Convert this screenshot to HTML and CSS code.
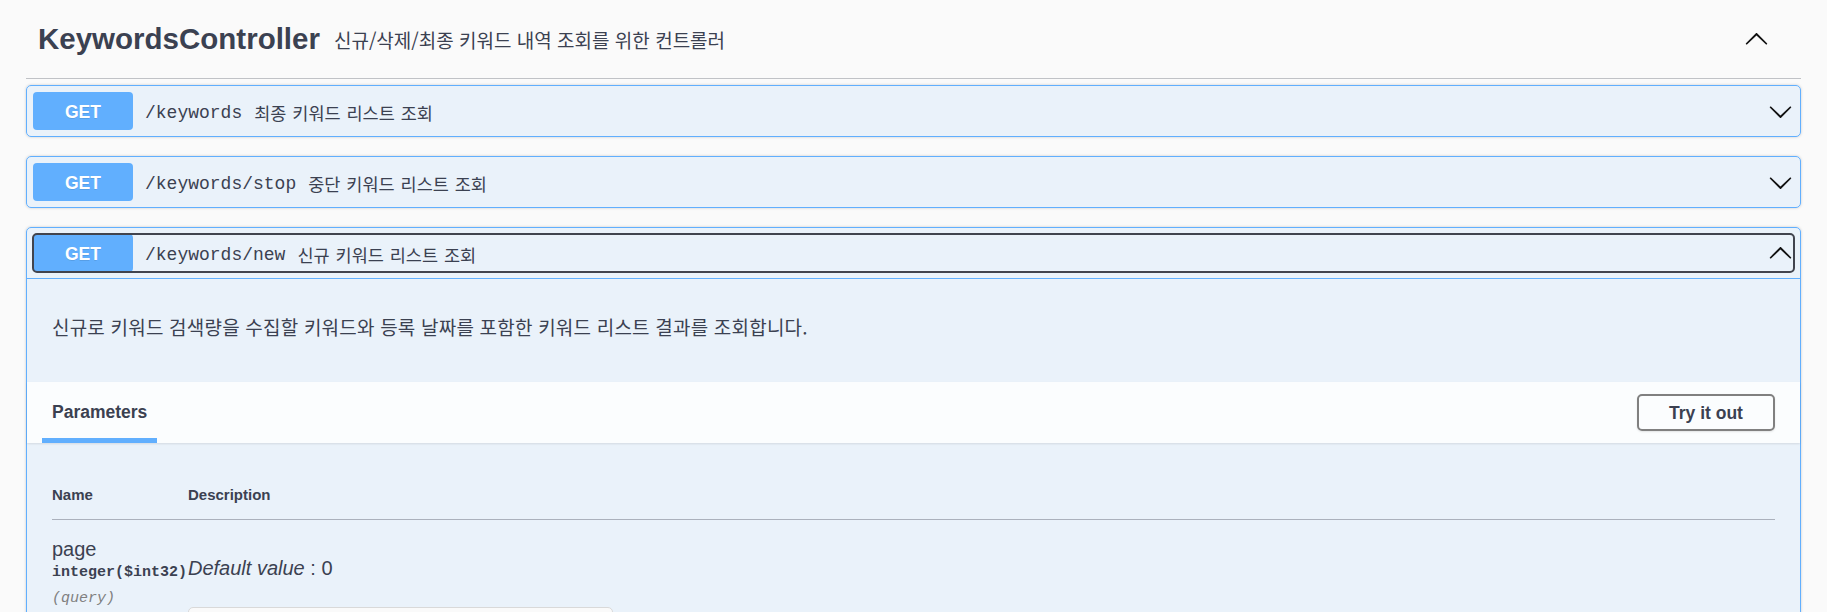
FILE: index.html
```html
<!DOCTYPE html>
<html lang="ko">
<head>
  <meta charset="UTF-8">
  <meta name="viewport" content="width=device-width, initial-scale=1.0">
  <title>Swagger UI</title>
  <link rel="stylesheet" href="styles.css">
</head>
<body>
  <div class="wrapper">
    <section class="tag-section">
      <h3 class="tag-header">
        <span class="tag-title">KeywordsController</span>
        <small class="tag-desc">신규/삭제/최종 키워드 내역 조회를 위한 컨트롤러</small>
        <button class="expand-btn">
          <svg width="25" height="25" viewBox="0 0 20 20"><path transform="rotate(180 10 10)" d="M17.418 6.109c.272-.268.709-.268.979 0s.271.701 0 .969l-7.908 7.83c-.27.268-.707.268-.979 0l-7.908-7.83c-.27-.268-.27-.701 0-.969.271-.268.709-.268.979 0L10 13.25l7.418-7.141z"/></svg>
        </button>
      </h3>

      <div class="opblock">
        <div class="summary">
          <div class="summary-control">
            <span class="method">GET</span>
            <span class="path">/keywords</span>
            <span class="summary-desc">최종 키워드 리스트 조회</span>
            <svg class="arrow" width="25" height="25" viewBox="0 0 20 20"><path d="M17.418 6.109c.272-.268.709-.268.979 0s.271.701 0 .969l-7.908 7.83c-.27.268-.707.268-.979 0l-7.908-7.83c-.27-.268-.27-.701 0-.969.271-.268.709-.268.979 0L10 13.25l7.418-7.141z"/></svg>
          </div>
        </div>
      </div>

      <div class="opblock">
        <div class="summary">
          <div class="summary-control">
            <span class="method">GET</span>
            <span class="path">/keywords/stop</span>
            <span class="summary-desc">중단 키워드 리스트 조회</span>
            <svg class="arrow" width="25" height="25" viewBox="0 0 20 20"><path d="M17.418 6.109c.272-.268.709-.268.979 0s.271.701 0 .969l-7.908 7.83c-.27.268-.707.268-.979 0l-7.908-7.83c-.27-.268-.27-.701 0-.969.271-.268.709-.268.979 0L10 13.25l7.418-7.141z"/></svg>
          </div>
        </div>
      </div>

      <div class="opblock is-open">
        <div class="summary">
          <div class="summary-control focused">
            <span class="method">GET</span>
            <span class="path">/keywords/new</span>
            <span class="summary-desc">신규 키워드 리스트 조회</span>
            <svg class="arrow" width="25" height="25" viewBox="0 0 20 20"><path transform="rotate(180 10 10)" d="M17.418 6.109c.272-.268.709-.268.979 0s.271.701 0 .969l-7.908 7.83c-.27.268-.707.268-.979 0l-7.908-7.83c-.27-.268-.27-.701 0-.969.271-.268.709-.268.979 0L10 13.25l7.418-7.141z"/></svg>
          </div>
        </div>

        <div class="opblock-body">
          <div class="description-wrapper">
            <p>신규로 키워드 검색량을 수집할 키워드와 등록 날짜를 포함한 키워드 리스트 결과를 조회합니다.</p>
          </div>

          <div class="section-header">
            <div class="tab">
              <h4 class="tab-title">Parameters</h4>
            </div>
            <button class="try-out">Try it out</button>
          </div>

          <div class="table-container">
            <table class="parameters">
              <thead>
                <tr>
                  <th class="col-name">Name</th>
                  <th class="col-desc">Description</th>
                </tr>
              </thead>
              <tbody>
                <tr>
                  <td class="col-name">
                    <div class="param-name">page</div>
                    <div class="param-type">integer($int32)</div>
                    <div class="param-in">(query)</div>
                  </td>
                  <td class="col-desc">
                    <p class="param-default"><i>Default value</i> : 0</p>
                    <input class="param-input" type="text" placeholder="page">
                  </td>
                </tr>
              </tbody>
            </table>
          </div>
        </div>
      </div>
    </section>
  </div>
</body>
</html>
```

FILE: styles.css
```css
html, body {
  margin: 0;
  height: 612px;
  overflow: hidden;
}

body {
  background-color: #fafafa;
  font-family: "Liberation Sans", "Noto Sans CJK KR", sans-serif;
  color: #3b4151;
}

.wrapper {
  padding: 0 26px;
}

/* tag header */
.tag-header {
  display: flex;
  align-items: center;
  box-sizing: border-box;
  height: 79px;
  margin: 0 0 6px;
  padding: 0 25px 0 12px;
  border-bottom: 1px solid rgba(59, 65, 81, 0.3);
}

.tag-title {
  font-size: 29.5px;
  font-weight: bold;
  color: #3b4151;
}

.tag-desc {
  flex: 1;
  padding: 0 14px;
  font-size: 19px;
  font-weight: normal;
  color: #3b4151;
  font-family: "Noto Sans CJK KR", sans-serif;
}

.expand-btn {
  display: flex;
  padding: 0;
  margin: 0 7px 0 0;
  border: none;
  background: none;
}

.expand-btn svg,
.arrow {
  fill: #111;
}

/* operation blocks */
.opblock {
  margin-bottom: 19px;
  border: 1px solid #61affe;
  border-radius: 5px;
  background-color: rgba(97, 175, 254, 0.1);
  box-shadow: 0 0 3px rgba(0, 0, 0, 0.19);
}

.summary {
  padding: 6px;
}

.is-open .summary {
  border-bottom: 1px solid #61affe;
}

.summary-control {
  display: flex;
  align-items: center;
  border-radius: 4px;
}

.summary-control.focused {
  outline: 2px solid #41444e;
  outline-offset: -1px;
}

.method {
  box-sizing: border-box;
  min-width: 100px;
  height: 38px;
  padding-top: 3px;
  line-height: 35px;
  border-radius: 4px;
  background-color: #61affe;
  color: #fff;
  font-size: 17.5px;
  font-weight: bold;
  text-align: center;
  text-shadow: 0 1px 0 rgba(0, 0, 0, 0.1);
}

.path {
  padding: 3px 12px 0;
  font-family: "Liberation Mono", "Noto Sans CJK KR", monospace;
  font-size: 18px;
  color: #3b4151;
}

.summary-desc {
  flex: 1;
  padding-top: 3px;
  font-family: "Noto Sans CJK KR", sans-serif;
  font-size: 17.5px;
  word-spacing: 1px;
  color: #3b4151;
}

.arrow {
  margin-right: 1px;
}

/* body */
.description-wrapper {
  padding: 34px 25px 42px;
}

.description-wrapper p {
  margin: 0;
  font-family: "Noto Sans CJK KR", sans-serif;
  font-size: 19px;
  letter-spacing: 0.2px;
  line-height: 27px;
  color: #3b4151;
}

.section-header {
  display: flex;
  align-items: center;
  height: 61px;
  padding: 0 25px;
  background-color: rgba(255, 255, 255, 0.8);
  box-shadow: 0 1px 2px rgba(0, 0, 0, 0.1);
}

.tab {
  position: relative;
  display: flex;
  align-items: center;
  height: 100%;
}

.tab-title {
  margin: 0;
  font-size: 17.5px;
  font-weight: bold;
  color: #3b4151;
}

.tab::after {
  content: "";
  position: absolute;
  bottom: 0;
  left: -10%;
  width: 120%;
  height: 5px;
  background-color: #61affe;
}

.try-out {
  margin-left: auto;
  box-sizing: border-box;
  width: 138px;
  height: 37px;
  padding: 2px 0 0;
  border: 2px solid #808080;
  border-radius: 5px;
  background-color: transparent;
  color: #3b4151;
  font-family: "Liberation Sans", sans-serif;
  font-size: 17.5px;
  font-weight: bold;
  box-shadow: 0 1px 2px rgba(0, 0, 0, 0.1);
}

.table-container {
  padding: 28px 25px 25px;
}

.parameters {
  width: 100%;
  border-collapse: collapse;
}

.parameters th {
  padding: 15px 0;
  line-height: 18px;
  font-size: 15px;
  font-weight: bold;
  text-align: left;
  color: #3b4151;
  border-bottom: 1px solid rgba(59, 65, 81, 0.2);
}

.parameters th.col-name {
  width: 136px;
}

.parameters td {
  padding: 18px 0 0;
  vertical-align: top;
}

.param-name {
  font-size: 20px;
  line-height: 23px;
}

.param-type {
  margin-top: 3px;
  font-family: "Liberation Mono", monospace;
  font-size: 15px;
  font-weight: bold;
  line-height: 18px;
  white-space: nowrap;
}

.param-in {
  margin-top: 8px;
  font-family: "Liberation Mono", monospace;
  font-size: 15px;
  font-style: italic;
  line-height: 18px;
  color: #808080;
}

.param-default {
  margin: 19px 0 0;
  font-size: 20px;
  line-height: 23px;
}

.param-input {
  display: block;
  box-sizing: border-box;
  width: 425px;
  height: 44px;
  margin-top: 27px;
  padding: 8px 12px;
  border: 1px solid #d9d9d9;
  border-radius: 5px;
  background-color: #fafafa;
  font-size: 17px;
}
```
